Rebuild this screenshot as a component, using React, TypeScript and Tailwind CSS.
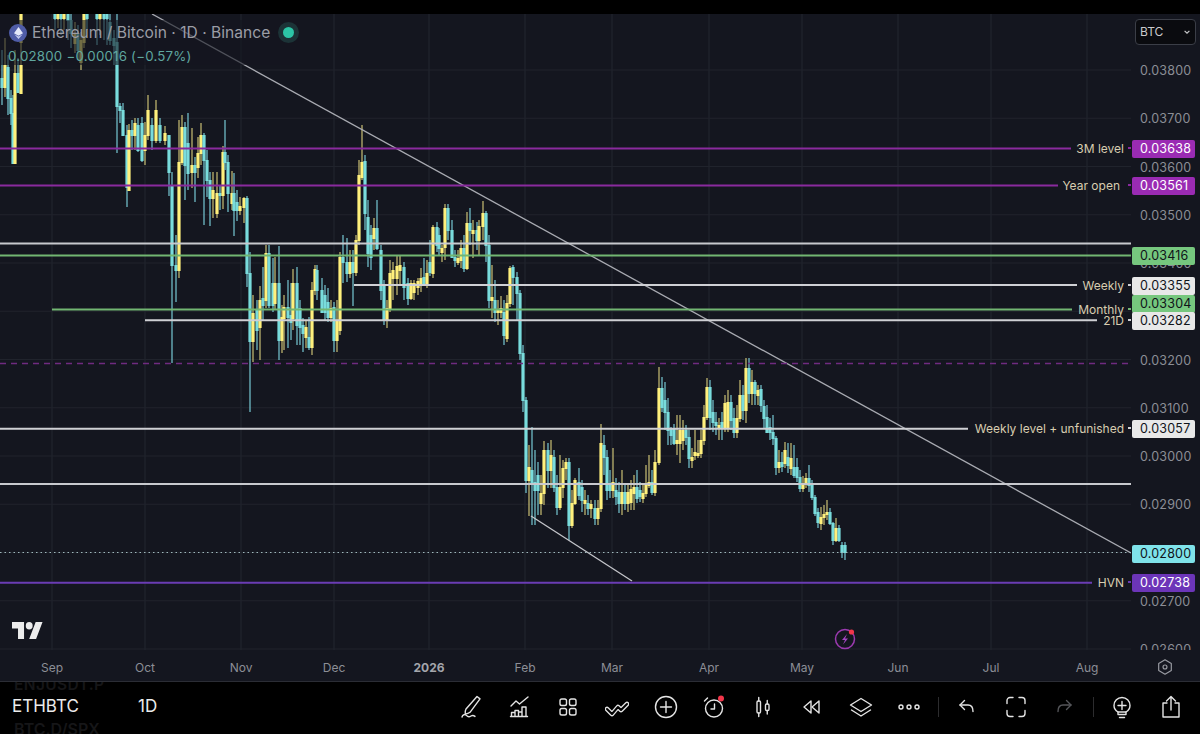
const candles: number[][] = [
  // x, open, close, high, low in page pixels (yellow when close is above open)
  [2, 78, 87, 50, 105], [5, 87, 65, 38, 97], [8, 67, 98, 55, 115], [11, 98, 113, 90, 125], [13, 113, 163, 95, 163], [15, 163, 73, 50, 163], [18, 73, 92, 58, 92], [21, 93, 65, 42, 93], [21, 42, 14, 14, 42],
  [55, 0, 18, 0, 30], [58, 18, 0, 0, 28], [61, 0, 18, 0, 35], [64, 18, 0, 0, 30], [68, 10, 20, 0, 40], [71, 20, 33, 10, 48], [75, 43, 33, 22, 53], [78, 33, 50, 25, 60], [81, 62, 40, 32, 70], [84, 42, 0, 0, 48], [87, 0, 18, 0, 30],
  [97, 0, 18, 0, 45], [100, 18, 0, 0, 35], [104, 0, 18, 0, 40], [107, 0, 18, 0, 45], [110, 22, 40, 14, 45], [114, 38, 45, 30, 65],
  [117, 42, 106, 14, 153], [120, 106, 110, 103, 123], [123, 110, 135, 103, 135], [127, 135, 187, 125, 207], [129, 190, 130, 124, 190], [132, 130, 135, 120, 150], [135, 135, 123, 118, 150], [138, 125, 150, 118, 152], [142, 123, 160, 117, 162], [145, 150, 135, 122, 165], [148, 135, 110, 95, 140], [152, 125, 140, 118, 150], [156, 140, 110, 100, 143], [160, 125, 140, 118, 143], [165, 140, 133, 126, 145], [169, 135, 172, 135, 196], [172, 185, 265, 172, 363], [176, 265, 270, 235, 302], [179, 270, 162, 120, 278], [182, 162, 127, 115, 165], [185, 127, 165, 122, 200], [188, 143, 173, 113, 190], [192, 172, 165, 128, 188], [195, 165, 172, 157, 202], [198, 167, 153, 137, 178], [201, 153, 135, 123, 165], [204, 135, 160, 133, 225], [207, 160, 180, 150, 197], [210, 180, 198, 172, 226], [213, 198, 190, 172, 218], [217, 213, 193, 172, 218], [220, 193, 195, 185, 210], [223, 195, 152, 146, 209], [225, 152, 162, 120, 170], [228, 162, 193, 155, 212], [232, 203, 193, 171, 210], [234, 193, 210, 173, 236], [237, 202, 210, 190, 221], [240, 210, 206, 197, 215], [244, 207, 198, 197, 223], [247, 198, 273, 196, 287],
  [250, 273, 341, 252, 412], [253, 341, 313, 295, 362], [257, 310, 330, 300, 350], [260, 327, 300, 286, 360], [263, 298, 305, 267, 320], [266, 300, 253, 245, 308], [269, 253, 305, 245, 308], [273, 283, 305, 258, 312], [275, 303, 283, 257, 310], [279, 283, 340, 246, 360], [282, 340, 317, 305, 353], [284, 318, 307, 295, 350], [288, 307, 317, 280, 348], [291, 315, 322, 283, 340], [293, 318, 283, 269, 330], [297, 283, 325, 267, 345], [300, 308, 327, 300, 345], [303, 325, 333, 318, 352], [306, 337, 327, 320, 348], [309, 337, 347, 317, 350], [312, 347, 290, 282, 355], [315, 290, 269, 265, 295], [317, 270, 290, 265, 300], [322, 290, 312, 278, 312], [325, 295, 312, 285, 320], [328, 302, 317, 288, 322], [331, 317, 308, 300, 322], [334, 307, 340, 302, 352], [337, 340, 320, 300, 352], [340, 330, 257, 252, 335],
  [343, 257, 262, 235, 283], [347, 262, 273, 238, 282], [350, 273, 262, 250, 278], [353, 262, 272, 250, 306], [356, 272, 240, 235, 276], [359, 240, 175, 160, 245], [362, 177, 162, 125, 180], [365, 161, 213, 155, 230], [368, 217, 253, 200, 267], [371, 235, 257, 225, 270], [374, 238, 228, 218, 250], [377, 228, 248, 200, 250], [381, 250, 290, 245, 300], [384, 285, 320, 280, 325], [387, 320, 308, 300, 328], [390, 308, 273, 260, 312], [393, 278, 270, 262, 300], [397, 278, 266, 255, 295], [400, 270, 265, 255, 285], [404, 267, 287, 262, 300], [408, 283, 298, 278, 305], [411, 298, 283, 280, 300], [414, 292, 283, 280, 300], [418, 287, 281, 278, 295], [421, 285, 278, 268, 292], [424, 277, 284, 258, 285], [427, 283, 273, 260, 288], [430, 262, 272, 240, 276], [433, 273, 227, 225, 278], [437, 227, 245, 222, 252], [439, 235, 248, 228, 256], [442, 252, 248, 245, 262], [445, 247, 208, 204, 260], [448, 208, 230, 204, 240], [452, 230, 257, 220, 258], [455, 257, 260, 250, 267], [458, 262, 258, 250, 265], [461, 260, 248, 240, 268], [464, 248, 268, 235, 272], [467, 268, 223, 212, 270], [470, 223, 230, 208, 245], [473, 233, 230, 220, 258], [477, 230, 240, 222, 250], [479, 240, 226, 220, 255], [483, 226, 213, 201, 240], [486, 213, 245, 211, 262], [489, 245, 300, 235, 308],
  [492, 300, 297, 265, 318], [495, 300, 312, 280, 322], [498, 312, 310, 300, 325], [501, 312, 308, 296, 318], [504, 312, 335, 300, 345], [507, 338, 303, 295, 342], [510, 303, 268, 266, 307], [513, 267, 277, 265, 305], [517, 277, 293, 272, 320], [520, 293, 353, 290, 360], [523, 353, 400, 345, 412],
  [526, 400, 480, 397, 493], [529, 480, 467, 445, 516], [532, 470, 482, 427, 525], [535, 482, 490, 450, 525], [538, 475, 490, 462, 515], [541, 503, 493, 475, 515], [544, 493, 450, 441, 505], [548, 450, 470, 443, 488], [551, 470, 455, 440, 488], [554, 457, 487, 450, 492], [557, 487, 507, 475, 515], [560, 507, 487, 455, 510], [563, 487, 468, 460, 498], [566, 468, 462, 458, 480], [569, 462, 525, 458, 540], [572, 525, 503, 490, 528], [575, 503, 480, 478, 505], [579, 482, 495, 468, 500], [582, 487, 500, 480, 512], [585, 503, 500, 490, 515], [588, 503, 508, 495, 515], [591, 508, 504, 500, 518], [595, 508, 518, 500, 525], [598, 518, 508, 500, 525], [601, 508, 443, 424, 512], [604, 445, 457, 435, 475], [607, 457, 490, 450, 500], [610, 483, 490, 470, 498], [613, 490, 482, 448, 498], [616, 490, 496, 478, 505], [619, 492, 503, 482, 513], [622, 503, 492, 470, 515], [625, 492, 503, 485, 510], [628, 503, 492, 484, 512], [631, 502, 489, 480, 510], [634, 493, 487, 475, 510], [637, 487, 498, 470, 503], [640, 490, 496, 482, 502], [643, 498, 493, 483, 503], [646, 493, 485, 465, 497], [649, 485, 482, 455, 488], [652, 482, 492, 470, 495], [655, 492, 462, 450, 496], [659, 462, 388, 367, 465], [662, 388, 407, 377, 412],
  [665, 400, 412, 382, 430], [668, 412, 430, 398, 445], [671, 428, 435, 427, 445], [674, 428, 443, 424, 445], [677, 443, 440, 415, 455], [680, 443, 430, 415, 463], [683, 440, 430, 420, 450], [686, 430, 437, 425, 445], [689, 437, 458, 430, 468], [692, 460, 457, 448, 468], [695, 455, 452, 430, 460], [698, 455, 453, 440, 458], [701, 453, 440, 430, 458], [704, 440, 417, 405, 445], [707, 417, 387, 378, 420], [710, 387, 417, 380, 430], [713, 412, 422, 400, 432], [716, 422, 425, 412, 435], [719, 428, 425, 418, 440], [722, 422, 428, 412, 440], [725, 428, 403, 395, 432], [728, 428, 402, 390, 432], [731, 402, 420, 395, 430], [734, 418, 432, 408, 438], [737, 432, 418, 405, 438], [740, 418, 395, 380, 422], [743, 395, 410, 385, 420], [746, 410, 368, 358, 423], [749, 368, 393, 358, 403], [752, 393, 382, 370, 405], [755, 382, 393, 380, 405], [758, 395, 390, 385, 405], [761, 389, 405, 385, 412], [764, 406, 418, 400, 428], [767, 417, 432, 405, 433], [770, 427, 432, 418, 440], [773, 432, 438, 415, 445], [776, 438, 467, 436, 475], [779, 467, 462, 450, 473], [782, 462, 466, 452, 472], [785, 463, 450, 442, 468], [788, 457, 465, 443, 473], [791, 468, 458, 443, 475], [794, 467, 475, 445, 478], [797, 467, 477, 458, 482], [800, 477, 488, 470, 492], [803, 488, 483, 476, 492], [806, 483, 478, 473, 488], [809, 478, 485, 465, 492], [812, 483, 497, 480, 500], [815, 497, 513, 495, 516], [818, 512, 522, 508, 528], [821, 523, 517, 507, 530], [824, 517, 514, 505, 525], [827, 514, 512, 500, 520], [830, 512, 523, 508, 525], [833, 523, 540, 522, 545], [836, 540, 528, 518, 542], [839, 528, 540, 525, 542], [842, 545, 552, 542, 558], [845, 545, 552, 542, 560],
]

const priceY = (p: number) => 70 + (0.038 - p) * 48250
const ticks = ['0.03800', '0.03700', '0.03600', '0.03500', '0.03400', '0.03200', '0.03100', '0.03000', '0.02900', '0.02700', '0.02600']
const months = [
  { label: 'Sep', x: 52 }, { label: 'Oct', x: 145 }, { label: 'Nov', x: 241 }, { label: 'Dec', x: 334 },
  { label: '2026', x: 429 }, { label: 'Feb', x: 525 }, { label: 'Mar', x: 612 }, { label: 'Apr', x: 709 },
  { label: 'May', x: 802 }, { label: 'Jun', x: 898 }, { label: 'Jul', x: 991 }, { label: 'Aug', x: 1087 },
]

// tagY is where the axis pushed a tag away from its line
const levels = [
  { price: '0.03638', note: '3M level', noteClass: 'right-[7px]', line: '#8a2a9e', tag: 'bg-[#9a2bb3] text-white', tick: 'bg-[#8a2a9e]', x1: 0, x2: 1071 },
  { price: '0.03561', note: 'Year open', noteClass: 'right-[11px]', line: '#8a2a9e', tag: 'bg-[#9a2bb3] text-white', tick: 'bg-[#8a2a9e]', x1: 0, x2: 1058 },
  { price: '0.03416', note: '', noteClass: '', line: '#72b672', tag: 'bg-[#76c77e] text-[#10141a]', tick: '', x1: 0, x2: 1131 },
  { price: '0.03355', note: 'Weekly', noteClass: 'right-[7px]', line: '#cfd0d4', tag: 'bg-[#e8e8e8] text-[#10141a]', tick: 'bg-[#cfd0d4]', x1: 354, x2: 1077 },
  { price: '0.03304', note: 'Monthly', noteClass: 'right-[7px]', line: '#72b672', tag: 'bg-[#76c77e] text-[#10141a]', tick: 'bg-[#72b672]', x1: 52, x2: 1072, tagY: 303 },
  { price: '0.03282', note: '21D', noteClass: 'right-[7px]', line: '#cfd0d4', tag: 'bg-[#e8e8e8] text-[#10141a]', tick: 'bg-[#cfd0d4]', x1: 145, x2: 1097, tagY: 320 },
  { price: '0.03057', note: 'Weekly level + unfunished', noteClass: 'right-[7px]', line: '#cfd0d4', tag: 'bg-[#e8e8e8] text-[#10141a]', tick: 'bg-[#cfd0d4]', x1: 0, x2: 968 },
  { price: '0.02800', note: '', noteClass: '', line: '', tag: 'bg-[#7fe3ea] text-[#10141a]', tick: '', x1: 0, x2: 0 },
  { price: '0.02738', note: 'HVN', noteClass: 'right-[7px]', line: '#6a3cb4', tag: 'bg-[#6c35b8] text-white', tick: 'bg-[#6a3cb4]', x1: 0, x2: 1092 },
]

function Chart() {
  return (
    <svg viewBox="0 14 1131 636" className="block w-full h-full">
      {months.map((m) => <line key={m.x} x1={m.x} x2={m.x} y1={14} y2={650} stroke="#232630" strokeWidth="1" />)}
      {ticks.concat('0.02800', '0.03300').map((t) => <line key={t} x1={0} x2={1131} y1={priceY(+t)} y2={priceY(+t)} stroke="#20232c" strokeWidth="1" />)}

      {candles.map(([x, o, c, h, l], i) => (
        <g key={i}>
          <line x1={x} x2={x} y1={h} y2={l} stroke={c < o ? '#bcb36e' : '#6fbcc6'} strokeWidth="1.3" />
          <rect x={x - 1.6} y={Math.min(o, c)} width="3.2" height={Math.abs(o - c) + 1} fill={c < o ? '#fff07c' : '#79dcdc'} />
        </g>
      ))}

      <line x1={152} y1={14} x2={1131} y2={553} stroke="#a9abb2" strokeWidth="1.3" />
      <line x1={531} y1={516} x2={632} y2={581} stroke="#c4c5ca" strokeWidth="1.3" />
      <line x1={0} x2={1131} y1={243.5} y2={243.5} stroke="#c8c9ce" strokeWidth="2" />
      <line x1={0} x2={1131} y1={484} y2={484} stroke="#c8c9ce" strokeWidth="2" />
      <line x1={0} x2={1131} y1={363.5} y2={363.5} stroke="#6f2b80" strokeWidth="1.4" strokeDasharray="6 5" />
      <line x1={0} x2={1131} y1={552.5} y2={552.5} stroke="#9fb8bc" strokeWidth="1" strokeDasharray="1.5 3" />
      {levels.filter((v) => v.line).map((v) => (
        <line key={v.price} x1={v.x1} x2={v.x2} y1={priceY(+v.price) + 0.3} y2={priceY(+v.price) + 0.3} stroke={v.line} strokeWidth="2" />
      ))}

      <g transform="translate(12 618.2) scale(.86 .94)" fill="#ececec">
        <path d="M14 22H7V11H0V4h14v18zM28 22h-8l7.500-18h8L28 22z" />
        <circle cx="20" cy="8" r="4" />
      </g>

      <circle cx="845" cy="639" r="9.500" fill="none" stroke="#9c3ab0" strokeWidth="1.500" />
      <path d="M847 634l-5 6h3l-2 4.500 5-6h-3z" fill="#a544c4" />
      <circle cx="851.500" cy="632" r="2.600" fill="#f2364a" />
    </svg>
  )
}

function Stroke({ children }: { children: React.ReactNode }) {
  return (
    <svg viewBox="0 0 24 24" className="w-6 h-6" fill="none" stroke="#e4e4e4" strokeWidth="1.4" strokeLinecap="round" strokeLinejoin="round">
      {children}
    </svg>
  )
}

const tools = [
  <Stroke key="pen"><path d="M18 1.5l3 2.4L11 17.3c-1.3 1-3 1.6-4.8 1.8-.3-1.8 0-3.6.8-5.1z" /><path d="M3 22c.6-2.4 3.2-3 4.4-1.6 1.2 1.4 3.2 1.6 4.6.6 1.2-.8 2.6-.8 4 .4" /></Stroke>,
  <Stroke key="chart"><path d="M3 11l5-5 3.5 3L20 2" /><path d="M3.500 21.500v-4h3.500v4M7 21.500v-6h3.500v6M10.500 21.500v-4.500H14v4.500M14 21.500v-9.500h4v9.500M2.500 21.500h17" /></Stroke>,
  <Stroke key="grid"><rect x="4" y="4" width="6.500" height="6.500" rx="1.800" /><rect x="13.500" y="4" width="6.500" height="6.500" rx="1.800" /><rect x="4" y="13.500" width="6.500" height="6.500" rx="1.800" /><rect x="13.500" y="13.500" width="6.500" height="6.500" rx="1.800" /></Stroke>,
  <svg key="multi" viewBox="0 0 24 24" className="w-6 h-6" fill="none" strokeLinecap="round" strokeLinejoin="round">
    <path d="M2 14l5 5 6-7 3 3 6-6" stroke="#e4e4e4" strokeWidth="4.600" />
    <path d="M2 14l5 5 6-7 3 3 6-6" stroke="#000" strokeWidth="2" />
  </svg>,
  <Stroke key="plus"><circle cx="12" cy="12" r="10.500" /><path d="M12 6.500v11M6.500 12h11" /></Stroke>,
  <svg key="alarm" viewBox="0 0 24 24" className="w-6 h-6" fill="none" stroke="#e4e4e4" strokeWidth="1.400" strokeLinecap="round" strokeLinejoin="round">
    <circle cx="12" cy="13.500" r="8.500" /><path d="M12.500 9v5H9" /><path d="M2.500 6l3-3" />
    <circle cx="19" cy="3.500" r="3" fill="#f2364a" stroke="none" />
  </svg>,
  <Stroke key="candles"><rect x="6" y="6" width="3.500" height="12" rx="1.200" /><path d="M7.750 2.500V6M7.750 18v3.500" /><rect x="14.500" y="9" width="3.500" height="6.500" rx="1.200" /><path d="M16.250 5.500V9M16.250 15.500v3.500" /></Stroke>,
  <Stroke key="rewind"><path d="M11 6l-7 6 7 6z" /><path d="M19 6l-7 6 7 6z" /></Stroke>,
  <Stroke key="layers"><path d="M12 3.500l10.500 6.500L12 16.500 1.500 10z" /><path d="M2.500 15L12 21l9.500-6" /></Stroke>,
  <Stroke key="dots"><circle cx="4" cy="12" r="2" /><circle cx="12" cy="12" r="2" /><circle cx="20" cy="12" r="2" /></Stroke>,
  null,
  <Stroke key="undo"><path d="M9.500 7L5 11.500 9.500 16" transform="translate(0 -1.500)" /><path d="M5 10h8c3 0 5 2.500 5 6.500" /></Stroke>,
  <Stroke key="full"><path d="M3 8.500V5.500A3 3 0 0 1 6 2.500h3M15 2.500h3a3 3 0 0 1 3 3v3M21 15.500v3a3 3 0 0 1-3 3h-3M9 21.500H6a3 3 0 0 1-3-3v-3" /></Stroke>,
  <svg key="redo" viewBox="0 0 24 24" className="w-6 h-6" fill="none" stroke="#55565a" strokeWidth="1.400" strokeLinecap="round" strokeLinejoin="round">
    <path d="M14.500 5.500L19 10l-4.500 4.500" /><path d="M19 10h-8c-3 0-5 2.500-5 6.500" />
  </svg>,
  null,
  <Stroke key="bulb"><path d="M8 19.500v-2.500c-2.500-1.500-4-3.800-4-6.500a8 8 0 0 1 16 0c0 2.700-1.500 5-4 6.500v2.500z" /><path d="M12 6.500v8M8 10.500h8M8 17h8M9.500 22.500h5" /></Stroke>,
  <Stroke key="share"><path d="M8 8H4v14h16V8h-4" /><path d="M12 15V1.500M7.500 6L12 1.500 16.500 6" /></Stroke>,
]

export default function App() {
  return (
    <div className="flex flex-col w-full h-screen overflow-hidden bg-black font-['Inter',sans-serif]">
      <div className="h-[14px] shrink-0 bg-black" />

      <div className="flex h-[636px] shrink-0 bg-[#14161f]">
        <div className="relative flex-1 overflow-hidden">
          <Chart />

          <div className="absolute left-0 top-[6px] w-[300px] h-[45px] pl-[9px] bg-[#14161f]/60">
            <div className="flex items-center h-[25px] gap-[5px]">
              <span className="flex items-center justify-center shrink-0 w-[18px] h-[18px] rounded-full bg-[#4f5ca8]">
                <svg viewBox="0 0 12 16" className="w-[9px] h-3">
                  <path d="M6 0L0 8.200 6 11.500l6-3.300z" fill="#e4e8fa" />
                  <path d="M6 12.500L0.500 9.500 6 16l5.500-6.500z" fill="#c6cdf0" />
                </svg>
              </span>
              <span className="text-[15.6px] leading-none text-[#9b9da6] whitespace-nowrap">Ethereum / Bitcoin · 1D · Binance</span>
              <span className="flex items-center justify-center shrink-0 w-[21px] h-[21px] ml-[3px] rounded-full bg-[#1c3337]">
                <span className="w-[11px] h-[11px] rounded-full bg-[#2cc5a6]" />
              </span>
            </div>
            <div className="-ml-px mt-[3px] text-[13.3px] leading-4 tracking-[0.2px] text-[#5fa79f] whitespace-nowrap">0.02800 −0.00016 (−0.57%)</div>
          </div>

          {levels.filter((v) => v.note).map((v) => (
            <div key={v.price} className={`absolute -translate-y-1/2 text-[12px] leading-4 text-[#d8cdb0] whitespace-nowrap ${v.noteClass}`} style={{ top: priceY(+v.price) - 13 }}>
              {v.note}
            </div>
          ))}
          {levels.filter((v) => v.tick).map((v) => (
            <div key={v.price} className={`absolute right-0 w-[3px] h-[2px] ${v.tick}`} style={{ top: priceY(+v.price) - 15 }} />
          ))}
        </div>

        <div className="relative w-[69px] shrink-0 overflow-hidden">
          {ticks.map((t) => (
            <div key={t} className="absolute left-[9px] -translate-y-1/2 text-[12.5px] leading-4 tracking-[0.2px] text-[#8c8e96]" style={{ top: priceY(+t) - 13 }}>{t}</div>
          ))}
          {levels.map((v) => (
            <div key={v.price} className={`absolute left-px w-[63px] h-[18px] -translate-y-1/2 pl-2 rounded-[2px] text-[12.5px] leading-[18px] tracking-[0.2px] ${v.tag}`} style={{ top: (v.tagY ?? priceY(+v.price)) - 13 }}>
              {v.price}
            </div>
          ))}
          <div className="absolute left-[4px] top-[5px] flex items-center justify-between w-[61px] h-[26px] px-[4px] rounded-[4px] border border-[#3b3e47] bg-[#0a0b0f] text-[12px] text-[#c9cacc]">
            BTC
            <svg viewBox="0 0 10 10" className="w-2 h-2" fill="none" stroke="#c9cacc" strokeWidth="1.500"><path d="M2 3.500L5 6.500 8 3.500" /></svg>
          </div>
        </div>
      </div>

      <div className="relative h-[32px] shrink-0 bg-[#14161f] border-b border-[#2b2d35] text-[12px] text-[#8c8e96]">
        {months.map((m) => (
          <span key={m.x} className={`absolute top-[10px] -translate-x-1/2 leading-4 ${m.label === '2026' ? 'font-bold text-[#a4a6ac]' : ''}`} style={{ left: m.x }}>{m.label}</span>
        ))}
        <svg viewBox="0 0 20 20" className="absolute left-[1156px] top-[8px] w-[18px] h-[18px]" fill="none" stroke="#9a9ca3" strokeWidth="1.300" strokeLinejoin="round">
          <path d="M10 2l7 4v8l-7 4-7-4V6z" /><circle cx="10" cy="10" r="2.200" />
        </svg>
      </div>

      <div className="relative flex items-center flex-1 pb-[2px] overflow-hidden">
        <div className="absolute left-[14px] top-[-7px] text-[15.5px] leading-5 font-semibold tracking-wide text-[#161618]">ENJUSDT.P</div>
        <div className="absolute left-[14px] bottom-[-5px] text-[16px] leading-5 font-semibold text-[#161618]">BTC.D/SPX</div>
        <span className="ml-3 w-[126px] text-[17px] text-[#ececec]">ETHBTC</span>
        <span className="text-[17px] text-[#ececec]">1D</span>
        <div className="flex items-center ml-auto mr-[5px]">
          {tools.map((icon, i) => icon
            ? <div key={i} className="flex items-center justify-center w-[48.7px]">{icon}</div>
            : <div key={i} className="w-px h-[20px] mx-[4px] bg-[#2c2c2e]" />)}
        </div>
      </div>
    </div>
  )
}
